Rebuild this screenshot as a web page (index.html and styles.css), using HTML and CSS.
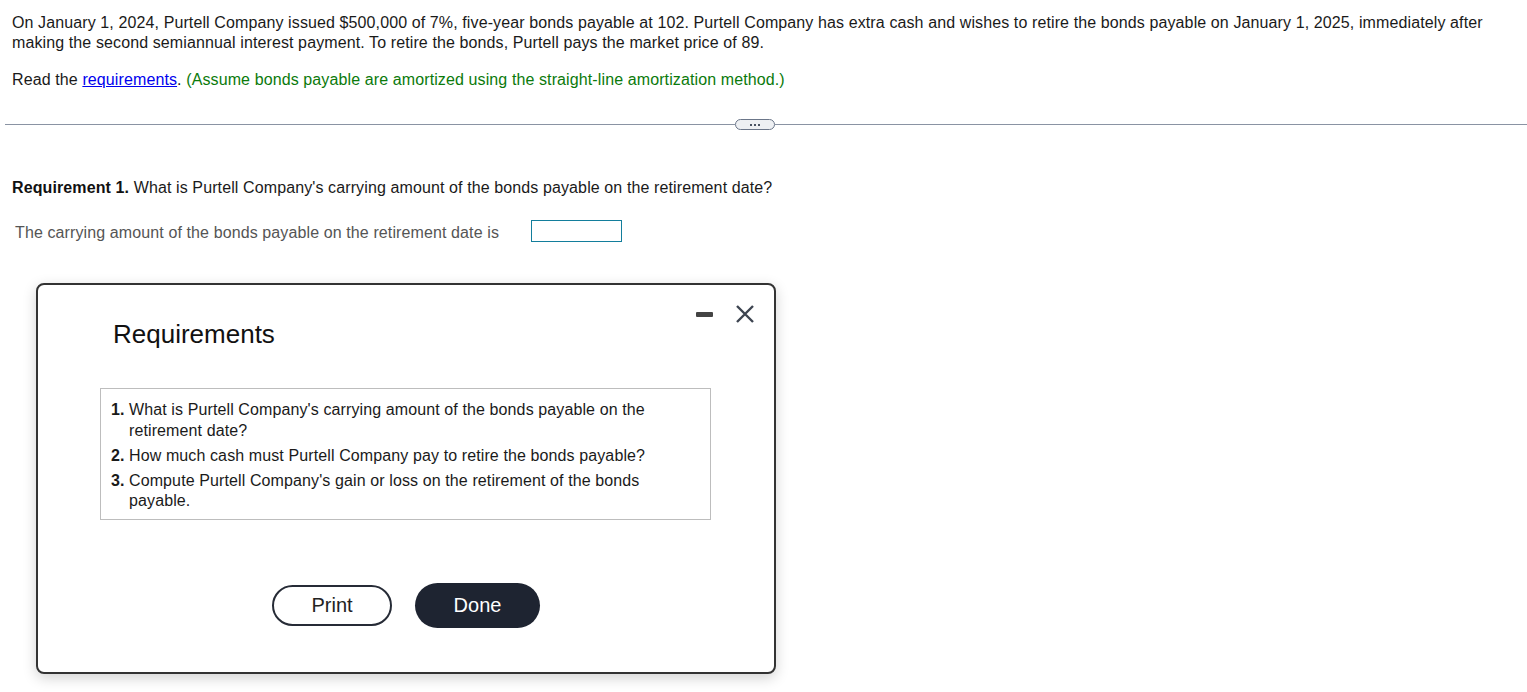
FILE: index.html
```html
<!DOCTYPE html>
<html lang="en">
<head>
<meta charset="utf-8">
<title>Bonds payable retirement</title>
<link rel="stylesheet" href="styles.css">
</head>
<body>
<div class="question">
  <p class="stem">On January 1, 2024, Purtell Company issued $500,000 of 7%, five-year bonds payable at 102. Purtell Company has extra cash and wishes to retire the bonds payable on January 1, 2025, immediately after making the second semiannual interest payment. To retire the bonds, Purtell pays the market price of 89.</p>
  <p class="stem read">Read the <a href="#" class="link">requirements</a>. <span class="note">(Assume bonds payable are amortized using the straight-line amortization method.)</span></p>
</div>

<div class="divider">
  <span class="divider-line left"></span>
  <button class="more" type="button"><span class="dot"></span><span class="dot"></span><span class="dot"></span></button>
  <span class="divider-line right"></span>
</div>

<div class="answer">
  <p class="req"><b>Requirement 1.</b> What is Purtell Company's carrying amount of the bonds payable on the retirement date?</p>
  <div class="answer-row">
    <span class="answer-label">The carrying amount of the bonds payable on the retirement date is</span>
    <span class="answer-input"></span>
  </div>
</div>

<div class="modal">
  <div class="modal-head">
    <h2 class="modal-title">Requirements</h2>
    <div class="modal-controls">
      <span class="minimize"></span>
      <svg class="close" width="20" height="19" viewBox="0 0 20 19"><path d="M2 1 L18 17 M18 1 L2 17" stroke="#3d4450" stroke-width="2.4" fill="none"/></svg>
    </div>
  </div>
  <ol class="req-list">
    <li><span class="num">1.</span><span>What is Purtell Company's carrying amount of the bonds payable on the retirement date?</span></li>
    <li><span class="num">2.</span><span>How much cash must Purtell Company pay to retire the bonds payable?</span></li>
    <li><span class="num">3.</span><span>Compute Purtell Company's gain or loss on the retirement of the bonds payable.</span></li>
  </ol>
  <div class="modal-buttons">
    <button class="btn btn-print" type="button">Print</button>
    <button class="btn btn-done" type="button">Done</button>
  </div>
</div>
</body>
</html>
```
FILE: styles.css
```css
* { box-sizing: border-box; }
html, body { margin: 0; padding: 0; background: #fff; }
body {
  font-family: "Liberation Sans", Arial, sans-serif;
  font-size: 16px;
  line-height: 20px;
  letter-spacing: 0.11px;
  color: #1a1a1a;
  width: 1527px;
  height: 692px;
  position: relative;
  overflow: hidden;
}
p { margin: 0; }

.question { padding: 13px 30px 0 12px; }
.read { margin-top: 17px; }
.link { color: #0000ee; text-decoration: underline; }
.note { color: #0b7a0b; }

.divider {
  display: flex;
  align-items: center;
  margin-top: 29px;
  padding-left: 5px;
}
.divider-line { height: 1px; background: #8a93a3; }
.divider-line.left { width: 730px; flex: none; }
.divider-line.right { flex: 1; }
.more {
  width: 40px;
  height: 11px;
  padding: 0;
  border: 1px solid #6b7689;
  border-radius: 6px;
  background: #eef0f3;
  display: flex;
  align-items: center;
  justify-content: center;
  gap: 2px;
  flex: none;
}
.dot { width: 2px; height: 2px; background: #4a5363; display: block; }

.answer { padding: 48px 12px 0 12px; }
.req b { font-weight: bold; color: #111; }
.answer-row {
  display: flex;
  align-items: flex-start;
  margin-top: 22px;
  padding-left: 3px;
}
.answer-label { color: #555; margin-top: 3px; }
.answer-input {
  width: 91px;
  height: 22px;
  border: 1px solid #137e9c;
  margin-left: 32px;
  display: block;
}

.modal {
  position: absolute;
  left: 36px;
  top: 283px;
  width: 740px;
  height: 391px;
  border: 2px solid #333;
  border-radius: 8px;
  background: #fff;
  box-shadow: 0 4px 14px rgba(0,0,0,0.18);
  padding: 0 0 0 62px;
}
.modal-head {
  display: flex;
  justify-content: space-between;
  align-items: flex-start;
}
.modal-title {
  margin: 34px 0 0 13px;
  font-size: 26px;
  line-height: 30px;
  font-weight: normal;
  letter-spacing: 0;
  color: #111;
}
.modal-controls {
  display: flex;
  align-items: center;
  gap: 22px;
  margin: 20px 19px 0 0;
}
.minimize { display: block; width: 17px; height: 5px; background: #444; border-radius: 1px; }
.close { display: block; }

.req-list {
  list-style: none;
  margin: 39px 0 0 0;
  width: 611px;
  border: 1px solid #bdbdbd;
  padding: 11px 12px 7px 10px;
  font-size: 16px;
  line-height: 20.5px;
}
.req-list li { display: flex; margin-bottom: 4.5px; }
.req-list li:last-child { margin-bottom: 0; }
.num { width: 18px; flex: none; font-weight: bold; }

.modal-buttons {
  display: flex;
  justify-content: center;
  align-items: center;
  gap: 23px;
  margin: 63px 62px 0 0;
}
.btn {
  font-family: "Liberation Sans", Arial, sans-serif;
  font-size: 20px;
  border-radius: 24px;
  cursor: pointer;
}
.btn-print {
  width: 120px;
  height: 41px;
  background: #fff;
  border: 2px solid #262b36;
  color: #222;
}
.btn-done {
  width: 125px;
  height: 45px;
  background: #1e2431;
  border: none;
  color: #fff;
}
```
